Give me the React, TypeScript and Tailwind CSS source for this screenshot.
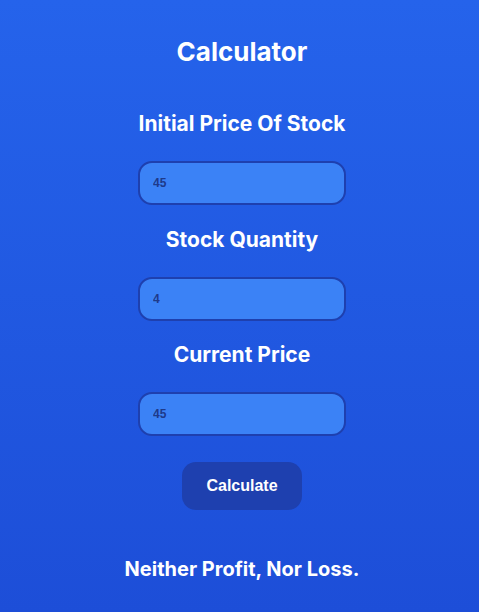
import { useState } from 'react';

interface FieldProps {
    label: string;
    value: string;
    onChange: (v: string) => void;
    className: string;
}

function Field({ label, value, onChange, className }: FieldProps) {
    return (
        <>
            <label className={`font-['Inter','Noto_Sans',sans-serif] text-[21px] font-bold leading-[30px] text-white ${className}`}>
                {label}
            </label>
            <input
                value={value}
                onChange={(e) => onChange(e.target.value)}
                className="mt-[22px] h-[44px] w-[208px] rounded-[14px] border-2 border-[#1e40af] bg-[#3b82f6] px-[13px] font-['Liberation_Sans',Arial,sans-serif] text-[12px] font-bold text-[#1e3a8a] outline-none"
            />
        </>
    );
}

export default function App() {
    const [initial, setInitial] = useState('45');
    const [qty, setQty] = useState('4');
    const [current, setCurrent] = useState('45');

    return (
        <div className="flex min-h-[612px] flex-col items-center bg-gradient-to-b from-[#2563eb] to-[#1d4ed8] pl-[5px] pt-9">
            <h1 className="font-['Inter','Noto_Sans',sans-serif] text-[26px] font-bold leading-[32px] text-white">
                Calculator
            </h1>
            <Field label="Initial Price Of Stock" value={initial} onChange={setInitial} className="mt-[41px]" />
            <Field label="Stock Quantity" value={qty} onChange={setQty} className="mt-[20px]" />
            <Field label="Current Price" value={current} onChange={setCurrent} className="mt-[19px]" />
            <button className="mt-[26px] h-[48px] w-[120px] rounded-[14px] bg-[#1e40af] font-['Liberation_Sans',Arial,sans-serif] text-[16px] font-bold text-white">
                Calculate
            </button>
            <p className="mt-[45px] font-['Inter','Noto_Sans',sans-serif] text-[20px] font-bold leading-[28px] text-white">
                Neither Profit, Nor Loss.
            </p>
        </div>
    );
}
